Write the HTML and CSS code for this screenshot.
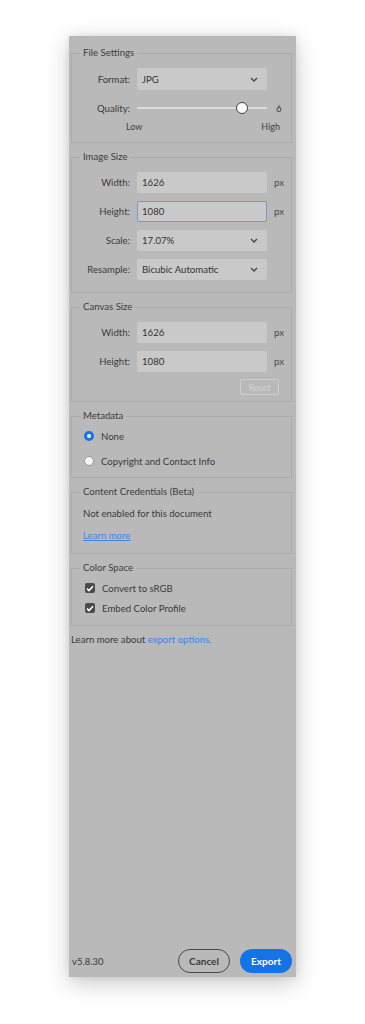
FILE: index.html
```html
<!DOCTYPE html>
<html>
<head>
<meta charset="utf-8">
<link rel="stylesheet" href="styles.css">
</head>
<body>
<div class="panel">
  <fieldset class="fs fs-file">
    <legend>File Settings</legend>
    <div class="row">
      <span class="lbl">Format:</span>
      <div class="field select"><span>JPG</span><svg class="chev" width="8" height="5" viewBox="0 0 8 5"><polyline points="1,1 4,4 7,1" fill="none" stroke="#444" stroke-width="1.3"/></svg></div>
    </div>
    <div class="row qrow">
      <span class="lbl">Quality:</span>
      <div class="slider"><div class="track"></div><div class="knob"></div></div>
      <span class="qval">6</span>
    </div>
    <div class="lowhigh"><span>Low</span><span>High</span></div>
  </fieldset>

  <fieldset class="fs fs-image">
    <legend>Image Size</legend>
    <div class="row"><span class="lbl">Width:</span><div class="field"><span>1626</span></div><span class="unit">px</span></div>
    <div class="row"><span class="lbl">Height:</span><div class="field focus"><span>1080</span></div><span class="unit">px</span></div>
    <div class="row"><span class="lbl">Scale:</span><div class="field select"><span>17.07%</span><svg class="chev" width="8" height="5" viewBox="0 0 8 5"><polyline points="1,1 4,4 7,1" fill="none" stroke="#444" stroke-width="1.3"/></svg></div></div>
    <div class="row"><span class="lbl">Resample:</span><div class="field select"><span>Bicubic Automatic</span><svg class="chev" width="8" height="5" viewBox="0 0 8 5"><polyline points="1,1 4,4 7,1" fill="none" stroke="#444" stroke-width="1.3"/></svg></div></div>
  </fieldset>

  <fieldset class="fs fs-canvas">
    <legend>Canvas Size</legend>
    <div class="row"><span class="lbl">Width:</span><div class="field"><span>1626</span></div><span class="unit">px</span></div>
    <div class="row"><span class="lbl">Height:</span><div class="field"><span>1080</span></div><span class="unit">px</span></div>
    <div class="resetrow"><div class="reset">Reset</div></div>
  </fieldset>

  <fieldset class="fs fs-meta">
    <legend>Metadata</legend>
    <div class="opt"><span class="radio on"></span><span>None</span></div>
    <div class="opt"><span class="radio"></span><span>Copyright and Contact Info</span></div>
  </fieldset>

  <fieldset class="fs fs-cc">
    <legend>Content Credentials (Beta)</legend>
    <div class="txt">Not enabled for this document</div>
    <div class="txt"><span class="link under">Learn more</span></div>
  </fieldset>

  <fieldset class="fs fs-color">
    <legend>Color Space</legend>
    <div class="opt chk"><span class="box"><svg width="8" height="7" viewBox="0 0 8 7"><polyline points="1,3.6 3,5.6 7,1.2" fill="none" stroke="#fff" stroke-width="1.5"/></svg></span><span>Convert to sRGB</span></div>
    <div class="opt chk"><span class="box"><svg width="8" height="7" viewBox="0 0 8 7"><polyline points="1,3.6 3,5.6 7,1.2" fill="none" stroke="#fff" stroke-width="1.5"/></svg></span><span>Embed Color Profile</span></div>
  </fieldset>

  <div class="more">Learn more about <span class="link">export options.</span></div>

  <div class="footer">
    <span class="ver">v5.8.30</span>
    <div class="btns">
      <div class="btn cancel">Cancel</div>
      <div class="btn export">Export</div>
    </div>
  </div>
</div>
</body>
</html>
```

FILE: styles.css
```css
* { box-sizing: border-box; }
html, body { margin: 0; padding: 0; background: #ffffff; }
body {
  font-family: Lato, "Open Sans", "Liberation Sans", sans-serif;
  font-size: 9.6px;
  color: #3a3a3a;
  width: 365px;
  height: 1024px;
  overflow: hidden;
}
.panel {
  margin: 36px 0 0 69px;
  width: 227px;
  height: 941px;
  background: #b9b9b9;
  box-shadow: 0 6px 22px rgba(0,0,0,0.22), 0 0 6px rgba(0,0,0,0.08);
  padding: 11px 4px 4px 2px;
  display: flex;
  flex-direction: column;
}
.fs {
  margin: 0;
  padding: 0;
  border: 1px solid #ababab;
  min-width: 0;
}
.fs legend {
  margin-left: 8px;
  padding: 0 3px;
  line-height: 12px;
  height: 12px;
  color: #3c3c3c;
}
.fs + .fs { margin-top: 8px; }
.row {
  display: flex;
  align-items: center;
  height: 21px;
}
.lbl {
  width: 58px;
  text-align: right;
  margin-right: 7px;
  flex: none;
}
.field {
  width: 130px;
  height: 21px;
  background: #c9c9c9;
  border-radius: 2px;
  display: flex;
  align-items: center;
  justify-content: space-between;
  padding: 0 9px 0 5px;
  color: #333;
  flex: none;
}
.field.focus { border: 1px solid #7e96c4; padding-left: 4px; }
.unit { margin-left: 7px; color: #4a4a4a; }

.fs-file { padding: 9px 0 9px; }
.fs-file .row:first-of-type { height: 22px; }
.fs-file .row:first-of-type .field { height: 22px; }
.qrow { margin-top: 11px; height: 14px; }
.slider { position: relative; width: 130px; height: 14px; flex: none; }
.track { position: absolute; left: 0; right: 0; top: 6px; height: 2px; background: #dadada; }
.knob {
  position: absolute; left: 99px; top: 1px;
  width: 12px; height: 12px; border-radius: 50%;
  background: #fafafa; border: 1.5px solid #444;
}
.qval { margin-left: 9px; }
.lowhigh {
  display: flex; justify-content: space-between;
  margin: 6px 0 0 54px; width: 154px;
  line-height: 12px; font-size: 9px; color: #404040;
}

.fs-image { padding: 9px 0 12px; margin-top: 8px; }
.fs-image .row + .row { margin-top: 8px; }
.fs-canvas { padding: 9px 0 6px; }
.fs-canvas .row + .row { margin-top: 8px; }
.resetrow { display: flex; justify-content: flex-end; margin: 7px 12px 0 0; }
.reset {
  width: 39px; height: 16px;
  border: 1px solid #cdcdcd; border-radius: 2px;
  color: #d2d2d2; font-size: 9px;
  display: flex; align-items: center; justify-content: center;
}

.opt { display: flex; align-items: center; height: 14px; }
.fs-meta { padding: 7px 0 9px; }
.fs-meta .opt { padding-left: 12px; }
.fs-meta .opt + .opt { margin-top: 11px; }
.radio {
  width: 10px; height: 10px; border-radius: 50%;
  background: #f4f4f4; border: 1px solid #9a9a9a;
  margin-right: 7px; flex: none;
}
.radio.on { background: #fff; border: 3.5px solid #1473e6; }

.fs-cc { padding: 9px 0 10px; }
.txt { height: 14px; line-height: 14px; padding-left: 11px; }
.fs-cc .txt + .txt { margin-top: 8px; }
.link { color: #3b87e0; }
.under { text-decoration: underline; }

.fs-color { padding: 7px 0 10px; }
.fs-color .opt { padding-left: 13px; }
.fs-color .opt + .opt { margin-top: 6px; }
.box {
  width: 10px; height: 10px; border-radius: 2px; background: #4a4a4a;
  display: flex; align-items: center; justify-content: center;
  margin-right: 7px; flex: none;
}

.more { margin-top: 7px; height: 14px; line-height: 14px; padding-left: 0; }

.footer {
  margin-top: auto;
  display: flex; align-items: center; justify-content: space-between;
  padding-left: 1px;
}
.ver { font-size: 9.5px; color: #3a3a3a; }
.btns { display: flex; gap: 10px; }
.btn {
  height: 24px; border-radius: 12px;
  display: flex; align-items: center; justify-content: center;
  font-weight: bold; font-size: 10px;
}
.cancel { width: 52px; border: 1.5px solid #474747; color: #3a3a3a; }
.export { width: 52px; background: #1473e6; color: #fff; }
```
